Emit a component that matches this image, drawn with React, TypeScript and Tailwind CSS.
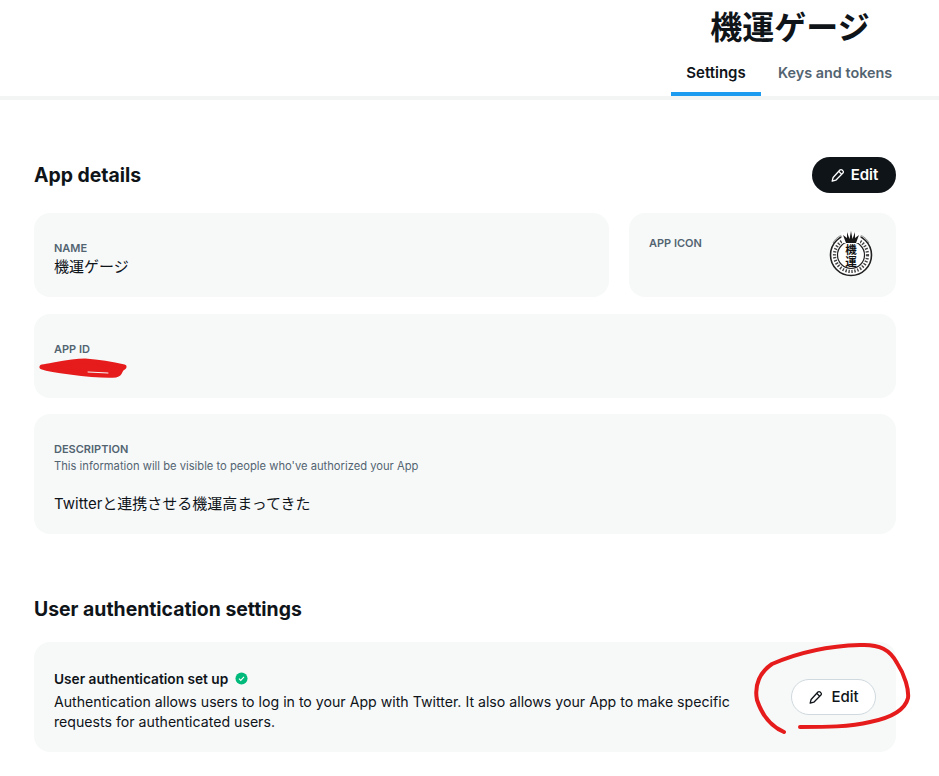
import React from "react";

const sans = "font-['Inter','Noto_Sans_CJK_JP',sans-serif]";

const PencilIcon: React.FC<{ className?: string }> = ({ className }) => (
  <svg viewBox="0 0 16 16" fill="none" stroke="currentColor" strokeWidth="1.4" strokeLinejoin="round" className={className}>
    <path d="M10.6 2.2a1.6 1.6 0 0 1 2.3 0l.9.9a1.6 1.6 0 0 1 0 2.3l-7.6 7.6-3.9 1 1-3.9z" />
    <path d="M9.4 3.6l3 3" />
  </svg>
);

const AppLogo = () => (
  <svg viewBox="0 0 44 48" className="h-[48px] w-[44px]">
    <path d="M4 14C10 1 34 1 40 14" fill="none" stroke="#999" strokeWidth="1" />
    <circle cx="22" cy="26" r="20.5" fill="#fff" stroke="#222" strokeWidth="1.6" />
    <circle cx="22" cy="26" r="16.5" fill="none" stroke="#444" strokeWidth="3.2" strokeDasharray="1.4 1.6" />
    <circle cx="22" cy="26" r="13.5" fill="#fff" stroke="#222" strokeWidth="1.2" />
    <path d="M13 14 12 3h20l-1 11z" fill="#fff" />
    <path d="M17 14 14 6l4 3 0-6 2.5 7L22 2l1.500 8L26 3l0 6 4-3-3 8z" fill="#1a1a1a" />
    <text x="22" y="15" writingMode="tb" fontSize="11.5" fontWeight="700" fill="#111" fontFamily="Noto Sans CJK JP">機運</text>
  </svg>
);

const Label: React.FC<{ children: React.ReactNode }> = ({ children }) => (
  <div className="text-[11px] font-semibold uppercase leading-[14px] text-[#536471]">{children}</div>
);

const Annotations = () => (
  <svg className="pointer-events-none absolute left-0 top-0 h-[776px] w-[939px]" viewBox="0 0 939 776" fill="none" stroke="#e61b1b" strokeLinecap="round" strokeLinejoin="round">
    <path strokeWidth="4" d="M784 732C770 726 762 715 757 700C754 685 760 672 772 664C795 654 825 646 860 645C880 644 890 650 897 663C905 675 909 690 908 698C905 710 890 718 870 722C850 727 825 727 800 727" />
    <path strokeWidth="5" d="M42 367C55 365 70 361 85 361C100 362 112 364 124 367C118 370 122 373 116 375C100 376 85 374 70 372C60 371 50 370 42 367Z" fill="#e61b1b" />
    <path strokeWidth="1" stroke="#f4f6f6" d="M88 372L108 373" />
  </svg>
);

export default function App() {
  return (
    <div className={`relative h-[776px] w-[939px] overflow-hidden bg-white text-[#0f1419] ${sans}`}>
      <header className="h-[100px] border-b-4 border-[#f3f4f4]">
        <div className="pl-[638px]">
          <h1 className="w-[304px] pt-[8px] text-center text-[32px] font-bold leading-[40px]">機運ゲージ</h1>
          <nav className="mt-[8px] flex font-semibold">
            <div className="ml-[33px] flex h-[40px] w-[90px] items-center justify-center border-b-4 border-[#1d9bf0] pb-[2px] text-[15px]">Settings</div>
            <div className="ml-[17px] flex h-[40px] items-center pb-[6px] text-[14.4px] text-[#536471]">Keys and tokens</div>
          </nav>
        </div>
      </header>

      <main className="pl-[34px] pr-[43px]">
        <section className="mt-[57px] flex items-center justify-between">
          <h2 className="text-[19.4px] font-bold leading-[36px]">App details</h2>
          <button className="flex h-[36px] w-[84px] items-center justify-center gap-[6px] rounded-full bg-[#0f1419] text-[15px] font-semibold text-white">
            <PencilIcon className="h-[15px] w-[15px]" />
            Edit
          </button>
        </section>

        <div className="mt-[20px] flex gap-[20px]">
          <div className="h-[84px] flex-1 rounded-2xl bg-[#f7f9f9] pl-[20px] pt-[28px]">
            <Label>Name</Label>
            <div className="mt-[3px] text-[15px] leading-[18px]">機運ゲージ</div>
          </div>
          <div className="flex h-[84px] w-[267px] justify-between rounded-2xl bg-[#f7f9f9] pl-[20px] pr-[23px] pt-[16px]">
            <div className="pt-[7px]"><Label>App icon</Label></div>
            <AppLogo />
          </div>
        </div>

        <div className="mt-[17px] h-[84px] rounded-2xl bg-[#f7f9f9] pl-[20px] pt-[28px]">
          <Label>App ID</Label>
        </div>

        <div className="mt-[16px] h-[120px] rounded-2xl bg-[#f7f9f9] pl-[20px] pt-[28px]">
          <Label>Description</Label>
          <div className="mt-[2px] text-[11.2px] leading-[16px] text-[#536471]">This information will be visible to people who've authorized your App</div>
          <div className="mt-[20px] text-[15px] leading-[20px]">Twitterと連携させる機運高まってきた</div>
        </div>

        <h2 className="mt-[57px] text-[19.4px] font-bold leading-[36px]">User authentication settings</h2>

        <div className="mt-[15px] flex h-[110px] items-center justify-between rounded-2xl bg-[#f7f9f9] pl-[20px] pr-[20px]">
          <div className="mt-[6px] w-[690px]">
            <div className="flex items-center gap-[7px] text-[13.7px] font-semibold leading-[20px]">
              User authentication set up
              <svg viewBox="0 0 14 14" className="h-[13px] w-[13px]">
                <circle cx="7" cy="7" r="6.5" fill="#00ba7c" />
                <path d="M4.3 7.2l1.9 1.9 3.5-3.9" fill="none" stroke="#fff" strokeWidth="1.2" />
              </svg>
            </div>
            <p className="mt-[3px] text-[14.15px] leading-[20px]">
              Authentication allows users to log in to your App with Twitter. It also allows your App to make specific requests for authenticated users.
            </p>
          </div>
          <button className="flex h-[36px] w-[85px] items-center justify-center gap-[8px] rounded-full border border-[#cfd9de] bg-white text-[15px] font-medium">
            <PencilIcon className="h-[15px] w-[15px]" />
            Edit
          </button>
        </div>
      </main>

      <Annotations />
    </div>
  );
}
